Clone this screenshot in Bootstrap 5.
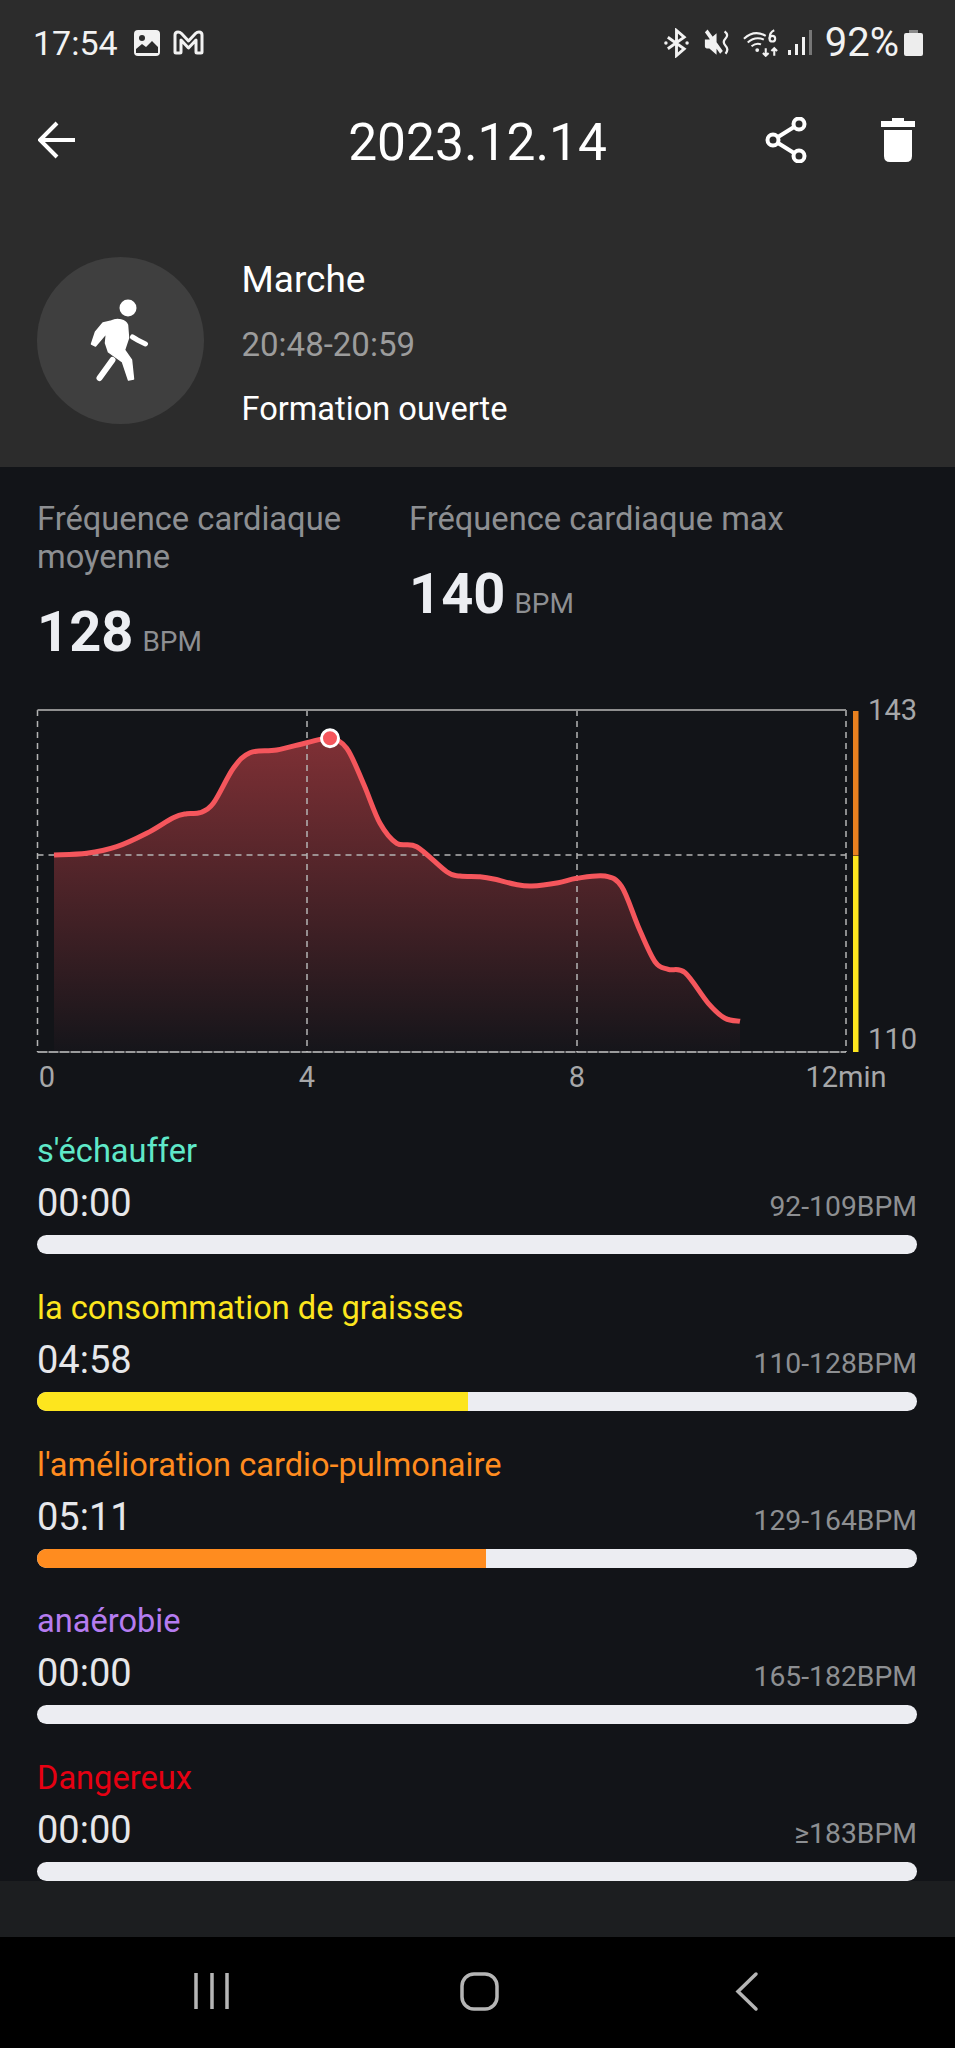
<!DOCTYPE html>
<html lang="fr">
<head>
<meta charset="utf-8">
<title>2023.12.14</title>
<link href="https://cdn.jsdelivr.net/npm/bootstrap@5.3.0/dist/css/bootstrap.min.css" rel="stylesheet">
<style>
html,body{margin:0;background:#121418}
body{width:955px;height:2048px;font-family:Roboto,"Liberation Sans",sans-serif;color:#fff;overflow:hidden}
.screen{height:2048px}
.top-area{background:#2c2c2c;height:467px}
.status-row{height:85px;padding:0 32px 0 33px}
.status-text{font-size:34px;line-height:1;color:#f2f2f2}
.pct-text{font-size:40px;line-height:1;color:#f2f2f2}
.app-row{height:110px;padding:0 40px 0 38px;position:relative}
.app-title{font-size:51.500px;line-height:1;position:absolute;left:0;right:0;text-align:center;top:32px;margin:0;font-weight:400}
.profile-row{padding:62px 0 0 37px}
.avatar-disc{width:167px;height:167px;border-radius:50%;background:#3f3f3f;flex:none}
.profile-text{margin:-10px 0 0 37.500px}
.profile-line{height:65px;line-height:65px;font-size:32.600px}
.profile-head{font-size:37px}
.profile-time{color:#9c9c9c;font-size:33px}
.body-area{background:#121418;flex:1 1 auto;min-height:0;overflow:hidden}
.stats-row{padding:33px 37px 0;height:223px}
.stat-a{width:372px}
.stat-label{font-size:32.700px;line-height:38px;color:#8d8f92}
.stat-value{margin-top:26px;line-height:60px;height:60px;font-size:56px;font-weight:700;color:#eceef2;white-space:nowrap}
.stat-unit{font-size:28px;font-weight:400;color:#8d8f92;margin-left:9px}
.chart-svg{display:block;width:955px;height:430px}
.axis-text{font-family:Roboto,"Liberation Sans",sans-serif;font-size:29px;fill:#a6a7a9}
.zones-box{padding:11px 38px 0 37px}
.zone-item{height:156.800px}
.zone-name{font-size:32.600px;line-height:40px;height:40px}
.zone-line{margin-top:8px;height:48px}
.zone-time{font-size:38px;line-height:48px;color:#e6e7ea}
.zone-range{font-size:28.300px;line-height:48px;color:#8d8f92;padding-top:4px}
.zone-track{--bs-progress-bg:#ecedf2;--bs-progress-height:19px;--bs-progress-border-radius:9.500px;margin-top:8px}
.c-teal{color:#5fe8c8}.c-yellow{color:#fde51e}.c-orange{color:#ff8c1f}.c-purple{color:#b57cf0}.c-red{color:#e60012}
.b-yellow{background:#fde51e}.b-orange{background:#ff8c1f}
.strip-row{height:56px;background:#1c1e20}
.nav-row{height:111px;background:#000}
.nav-svg{display:block;width:955px;height:111px}
</style>
</head>
<body>
<div class="screen d-flex flex-column">
  <div class="top-area flex-shrink-0">
    <div class="status-row d-flex align-items-center justify-content-between">
      <div class="d-flex align-items-center">
        <span class="status-text">17:54</span>
        <svg style="margin-left:15px" width="28" height="28" viewBox="0 0 28 28"><rect x="1" y="1" width="26" height="26" rx="4" fill="#f2f2f2"/><circle cx="9" cy="9" r="3" fill="#2c2c2c"/><path d="M3 24V20L9 15 13 18 19 12 25 18V24Z" fill="#2c2c2c"/></svg>
        <svg style="margin-left:12px" width="31" height="25" viewBox="0 0 31 25" fill="none" stroke="#f2f2f2" stroke-width="3" stroke-linejoin="round"><path d="M2 22V5Q2 2 5 2 7 2 8.500 3.500L15.500 11 22.500 3.500Q24 2 26 2 29 2 29 5V22Q29 23 28 23H24Q23 23 23 22V10L15.500 18 8 10V22Q8 23 7 23H3Q2 23 2 22Z"/></svg>
      </div>
      <div class="d-flex align-items-center">
        <svg width="25" height="30" viewBox="0 0 26 30" fill="none" stroke="#f2f2f2" stroke-width="3"><path d="M4 9 21 21 13 28V2L21 9 4 21"/><circle cx="2" cy="15" r="1.800" fill="#f2f2f2" stroke="none"/><circle cx="24" cy="15" r="1.800" fill="#f2f2f2" stroke="none"/></svg>
        <svg style="margin-left:15px" width="26" height="28" viewBox="0 0 29 30"><path d="M1 3 4 0 21 24 18 27Z M1 11H6L14 4V28L6 21H3Q1 21 1 19Z" fill="#f2f2f2"/><path d="M23 2Q28 6 24 10 20 14 24 18 28 22 24 27" fill="none" stroke="#f2f2f2" stroke-width="2.500"/></svg>
        <svg style="margin-left:13px" width="36" height="29" viewBox="0 0 38 30" fill="none" stroke="#f2f2f2" stroke-width="2.200"><path d="M1 11Q12 1 24 8M5 15Q13 8 22 12M9 19Q14 15 19 17"/><circle cx="15" cy="23" r="2" fill="#f2f2f2" stroke="none"/><path d="M24 21V29M21 26 24 29 27 26M33 29V21M30 24 33 21 36 24"/><circle cx="31" cy="11" r="3"/><path d="M28 11Q28 4 33 2"/></svg>
        <svg style="margin-left:9px" width="24" height="26" viewBox="0 0 24 26"><rect x="0" y="20" width="3" height="5" fill="#f2f2f2"/><rect x="7" y="14" width="3" height="11" fill="#f2f2f2"/><rect x="14" y="7" width="3" height="18" fill="#f2f2f2"/><rect x="21" y="0" width="3" height="25" fill="#777"/></svg>
        <span class="pct-text" style="margin-left:13px">92%</span>
        <svg style="margin-left:5px" width="19" height="26" viewBox="0 0 19 26"><rect x="5" y="0" width="9" height="4" fill="#8a8a8a"/><rect x="0" y="3" width="19" height="23" rx="2" fill="#ededed"/></svg>
      </div>
    </div>
    <div class="app-row d-flex align-items-center justify-content-between">
      <svg width="38" height="38" viewBox="0 0 38 38" fill="none" stroke="#fff" stroke-width="4" stroke-linejoin="miter"><path d="M37 19H3M19 2 2 19 19 36"/></svg>
      <h1 class="app-title">2023.12.14</h1>
      <div class="d-flex align-items-center">
        <svg width="44" height="46" viewBox="0 0 44 46" fill="none" stroke="#fff" stroke-width="4"><circle cx="35" cy="7" r="5.500"/><circle cx="9" cy="23" r="5.500"/><circle cx="35" cy="39" r="5.500"/><path d="M30 10 14 20M14 26 30 36"/></svg>
        <svg style="margin-left:73px" width="34" height="44" viewBox="0 0 34 44"><path d="M11 0H23V3H34V9H0V3H11Z" fill="#fff"/><path d="M3 12H31V38Q31 44 25 44H9Q3 44 3 38Z" fill="#fff"/></svg>
      </div>
    </div>
    <div class="profile-row d-flex">
      <div class="avatar-disc">
        <svg width="167" height="167" viewBox="37.500 257 167 167">
          <circle cx="128.500" cy="308" r="8.500" fill="#fff"/>
          <path d="M112 321C118 318 126 320 128 325L129 338 125 350 132 360 134 379 129 380 123 362 109 352 106 343 107 333 96 346 92 344 96 332 103.500 323Z" fill="#fff" stroke="#fff" stroke-width="1.500" stroke-linejoin="round"/>
          <path d="M133 337 138 340 146 344" fill="none" stroke="#fff" stroke-width="5" stroke-linecap="round"/>
          <path d="M113 360 100 378" fill="none" stroke="#fff" stroke-width="6" stroke-linecap="round"/>
        </svg>
      </div>
      <div class="profile-text">
        <div class="profile-line profile-head">Marche</div>
        <div class="profile-line profile-time">20:48-20:59</div>
        <div class="profile-line">Formation ouverte</div>
      </div>
    </div>
  </div>

  <div class="body-area">
    <div class="stats-row d-flex">
      <div class="stat-a">
        <div class="stat-label">Fréquence cardiaque<br>moyenne</div>
        <div class="stat-value">128<span class="stat-unit">BPM</span></div>
      </div>
      <div>
        <div class="stat-label">Fréquence cardiaque max</div>
        <div class="stat-value">140<span class="stat-unit">BPM</span></div>
      </div>
    </div>

    <svg class="chart-svg" viewBox="0 690 955 430">
      <defs>
        <linearGradient id="areaFill" gradientUnits="userSpaceOnUse" x1="0" y1="738" x2="0" y2="1052">
          <stop offset="0" stop-color="#7f3035"/>
          <stop offset="1" stop-color="#15151a"/>
        </linearGradient>
      </defs>
      <path id="curveArea" fill="url(#areaFill)" d=""/>
      <g fill="none" stroke="#b4b4b4" stroke-width="1.500" stroke-dasharray="6 5">
        <path d="M37.500 710V1052M307 710V1052M577 710V1052M846 710V1052M37.500 855H846"/>
      </g>
      <path d="M37.500 710H846" stroke="#8f8f8f" stroke-width="2"/>
      <path d="M37.500 1052H846" stroke="#c8c8c8" stroke-width="1.500" stroke-dasharray="10 1"/>
      <path id="curveLine" fill="none" stroke="#f5565c" stroke-width="5" d=""/>
      <circle cx="330" cy="738.300" r="8.500" fill="#f5565c" stroke="#fff" stroke-width="3"/>
      <rect x="853" y="711" width="5.500" height="144.500" fill="#e8801f"/>
      <rect x="853" y="856" width="5.500" height="196" fill="#fde51e"/>
      <text class="axis-text" x="917" y="720" text-anchor="end">143</text>
      <text class="axis-text" x="917" y="1049" text-anchor="end">110</text>
      <text class="axis-text" x="47" y="1087" text-anchor="middle">0</text>
      <text class="axis-text" x="307" y="1087" text-anchor="middle">4</text>
      <text class="axis-text" x="577" y="1087" text-anchor="middle">8</text>
      <text class="axis-text" x="846" y="1087" text-anchor="middle">12min</text>
    </svg>

    <div class="zones-box">
      <div class="zone-item">
        <div class="zone-name c-teal">s'échauffer</div>
        <div class="zone-line d-flex justify-content-between"><span class="zone-time">00:00</span><span class="zone-range">92-109BPM</span></div>
        <div class="progress zone-track"></div>
      </div>
      <div class="zone-item">
        <div class="zone-name c-yellow">la consommation de graisses</div>
        <div class="zone-line d-flex justify-content-between"><span class="zone-time">04:58</span><span class="zone-range">110-128BPM</span></div>
        <div class="progress zone-track"><div class="progress-bar b-yellow" style="width:49%"></div></div>
      </div>
      <div class="zone-item">
        <div class="zone-name c-orange">l'amélioration cardio-pulmonaire</div>
        <div class="zone-line d-flex justify-content-between"><span class="zone-time">05:11</span><span class="zone-range">129-164BPM</span></div>
        <div class="progress zone-track"><div class="progress-bar b-orange" style="width:51%"></div></div>
      </div>
      <div class="zone-item">
        <div class="zone-name c-purple">anaérobie</div>
        <div class="zone-line d-flex justify-content-between"><span class="zone-time">00:00</span><span class="zone-range">165-182BPM</span></div>
        <div class="progress zone-track"></div>
      </div>
      <div class="zone-item">
        <div class="zone-name c-red">Dangereux</div>
        <div class="zone-line d-flex justify-content-between"><span class="zone-time">00:00</span><span class="zone-range">≥183BPM</span></div>
        <div class="progress zone-track"></div>
      </div>
    </div>
  </div>

  <div class="strip-row flex-shrink-0"></div>
  <div class="nav-row flex-shrink-0">
    <svg class="nav-svg" viewBox="0 1937 955 111" fill="none" stroke="#b5b5b5" stroke-width="3.500">
      <path d="M196 1973V2009M212 1973V2009M227 1973V2009"/>
      <rect x="462" y="1974" width="35" height="35" rx="12"/>
      <path d="M756 1974 738 1991.500 756 2009" stroke-linecap="round"/>
    </svg>
  </div>
</div>
<script>
(function(){
  var p=[[54,855],[86.7,853.3],[116.7,846.7],[146.7,833.3],[173.3,817.7],[186.7,813.7],[200,812.7],[213.3,803.3],[233.3,768.3],[250,752.7],[276.7,750],[306.7,742.7],[330,738.3],[346.7,748.3],[363.3,783.3],[380,823.3],[396.7,843.3],[416.7,846.7],[446.7,871.7],[460,876],[480,876.7],[495,879.3],[515,884.3],[531.7,886],[558.3,882.7],[576.7,878.3],[605,876],[621.7,886.7],[638.3,926.7],[655,961.7],[668.3,969.3],[685,972.7],[708.3,1003.3],[725,1018.3],[740,1021.3]];
  var d="M"+p[0][0]+" "+p[0][1];
  for(var i=0;i<p.length-1;i++){
    var a=p[Math.max(i-1,0)],b=p[i],c=p[i+1],e=p[Math.min(i+2,p.length-1)];
    d+="C"+(b[0]+(c[0]-a[0])/6).toFixed(1)+" "+(b[1]+(c[1]-a[1])/6).toFixed(1)+" "+(c[0]-(e[0]-b[0])/6).toFixed(1)+" "+(c[1]-(e[1]-b[1])/6).toFixed(1)+" "+c[0]+" "+c[1];
  }
  document.getElementById("curveLine").setAttribute("d",d);
  document.getElementById("curveArea").setAttribute("d",d+"V1052H54Z");
})();
</script>
<script src="https://cdn.jsdelivr.net/npm/bootstrap@5.3.0/dist/js/bootstrap.bundle.min.js"></script>
</body>
</html>
